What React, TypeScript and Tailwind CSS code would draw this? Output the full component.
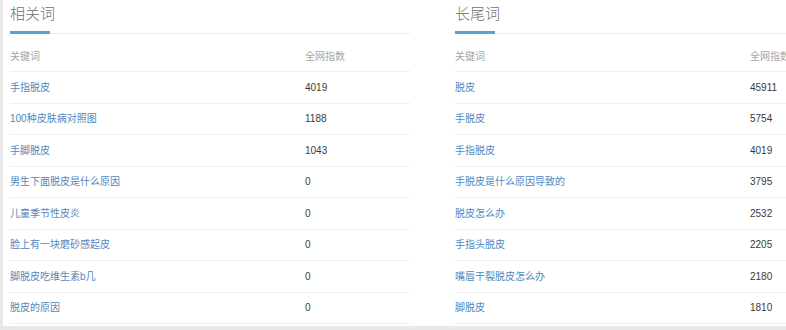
import React from 'react'

type Row = { word: string; index: string }

const related: Row[] = [
  { word: '手指脱皮', index: '4019' },
  { word: '100种皮肤病对照图', index: '1188' },
  { word: '手脚脱皮', index: '1043' },
  { word: '男生下面脱皮是什么原因', index: '0' },
  { word: '儿童季节性皮炎', index: '0' },
  { word: '脸上有一块磨砂感起皮', index: '0' },
  { word: '脚脱皮吃维生素b几', index: '0' },
  { word: '脱皮的原因', index: '0' },
]

const longTail: Row[] = [
  { word: '脱皮', index: '45911' },
  { word: '手脱皮', index: '5754' },
  { word: '手指脱皮', index: '4019' },
  { word: '手脱皮是什么原因导致的', index: '3795' },
  { word: '脱皮怎么办', index: '2532' },
  { word: '手指头脱皮', index: '2205' },
  { word: '嘴唇干裂脱皮怎么办', index: '2180' },
  { word: '脚脱皮', index: '1810' },
]

const WordTable: React.FC<{ title: string; rows: Row[] }> = ({ title, rows }) => (
  <div className="w-[400px] shrink-0">
    <div className="h-[34px] border-b border-[#ededed]">
      <div className="h-[34px] w-[40px] whitespace-nowrap border-b-[3px] border-[#5ba3c9] pt-[3px] text-[15px] font-light leading-[22px] text-[#707070]">
        {title}
      </div>
    </div>
    <div className="mt-[7px] flex h-[31px] items-center whitespace-nowrap border-b border-[#efefef] text-[10px] text-[#a5a5a5]">
      <div className="w-[295px]">关键词</div>
      <div>全网指数</div>
    </div>
    {rows.map((r) => (
      <div key={r.word} className="flex h-[31.5px] items-center whitespace-nowrap border-b border-[#efefef] text-[10px]">
        <div className="w-[295px] text-[#5088bd]">{r.word}</div>
        <div className="text-[#3a3a3a]">{r.index}</div>
      </div>
    ))}
  </div>
)

const App: React.FC = () => {
  return (
    <div
      className="h-[330px] w-[786px] overflow-hidden bg-[#e8e8e8]"
      style={{ fontFamily: '"Liberation Sans", "Noto Sans CJK SC", sans-serif' }}
    >
      <div className="ml-[3px] flex h-[326px] gap-[45px] bg-white pl-[7px]">
        <WordTable title="相关词" rows={related} />
        <WordTable title="长尾词" rows={longTail} />
      </div>
    </div>
  )
}

export default App
